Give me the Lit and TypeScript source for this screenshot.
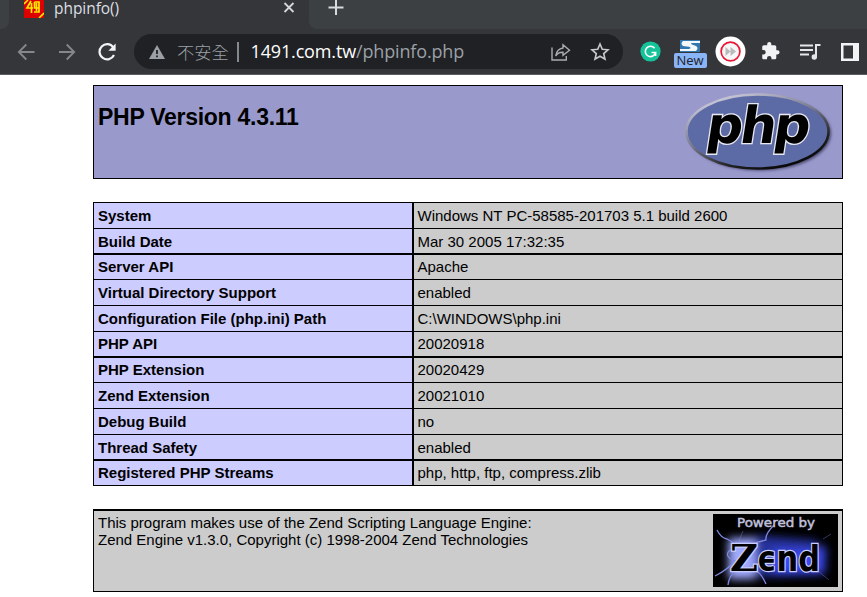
import { LitElement, html, css, svg } from "lit";
import { customElement } from "lit/decorators.js";

const ROWS: [string, string][] = [
  ["System", "Windows NT PC-58585-201703 5.1 build 2600"],
  ["Build Date", "Mar 30 2005 17:32:35"],
  ["Server API", "Apache"],
  ["Virtual Directory Support", "enabled"],
  ["Configuration File (php.ini) Path", "C:\\WINDOWS\\php.ini"],
  ["PHP API", "20020918"],
  ["PHP Extension", "20020429"],
  ["Zend Extension", "20021010"],
  ["Debug Build", "no"],
  ["Thread Safety", "enabled"],
  ["Registered PHP Streams", "php, http, ftp, compress.zlib"],
];

@customElement("browser-chrome")
class BrowserChrome extends LitElement {
  static styles = css`
    :host { display: block; height: 75px; background: #35363a; box-sizing: border-box; border-bottom: 1px solid #5b5c60; font-family: "Open Sans", "Noto Sans CJK TC", sans-serif; }
    svg { display: block; flex: none; }
    .tabs { display: flex; height: 29px; background: #3c4043; }
    .left { width: 9px; background: #3c4043; border-radius: 0 0 8px 0; }
    .under { background: #35363a; display: flex; width: 100%; }
    .tab { width: 300px; display: flex; align-items: flex-start; }
    .fav { margin-left: 15px; }
    .title { margin: 0 0 0 10px; font-size: 15.5px; line-height: 17px; color: #dcdee1; width: 219px; white-space: nowrap; letter-spacing: -0.05px; }
    .close { margin-top: 1px; margin-left: 9px; }
    .rest { flex: 1; background: #3c4043; border-radius: 0 0 0 8px; padding-left: 19px; }
    .bar { display: flex; align-items: center; height: 45px; }
    .back { margin-left: 17px; }
    .fwd { margin-left: 20px; }
    .reload { margin-left: 19px; }
    .omni { margin-left: 18px; width: 489px; height: 35px; border-radius: 18px; background: #202124; display: flex; align-items: center; font-size: 18px; line-height: 35px; white-space: nowrap; }
    .warn { margin-left: 14px; }
    .unsafe { margin-left: 11px; color: #9aa0a6; width: 52px; font-family: "Noto Sans CJK TC", sans-serif; font-weight: 300; font-size: 17.3px; }
    .sep { width: 1.5px; height: 20px; background: #85888c; margin-left: 8px; }
    .url { margin-left: 12px; color: #9aa0a6; width: 300px; letter-spacing: -0.15px; }
    .host { color: #fff; }
    .star { margin-left: 19px; }
    .gram { margin-left: 17px; }
    .ext { margin-left: 12px; width: 34px; height: 30px; display: flex; flex-direction: column; align-items: center; margin-top: 7px; }
    .badge { margin-top: 1px; background: #8ab4f8; color: #202124; border-radius: 2px; font-size: 13px; line-height: 15px; height: 15px; width: 33px; text-align: center; }
    .ff { margin-left: 8px; }
    .puz { margin-left: 15px; }
    .media { margin-left: 20px; }
    .panel { margin-left: 19px; }
  `;
  render() {
    return html`
      <div class="tabs"><div class="under">
        <div class="left"></div>
        <div class="tab">
          <svg class="fav" width="20" height="18" viewBox="0 0 20 18"><path fill="#dc0000" d="M0 0H20V18H0Z"/><path d="M0 4L4 0M15 18L20 13" stroke="#ffe800" stroke-width="1.6"/><path d="M7 1L3 8H9M7.500 3V13M10.500 2H15V12H10M10.500 2V8H14.500M12.500 3V11" fill="none" stroke="#ffe800" stroke-width="1.7"/></svg>
          <span class="title">phpinfo()</span>
          <svg class="close" width="14" height="14" viewBox="0 0 14 14"><path d="M2.500 2L11.500 11M11.500 2L2.500 11" stroke="#d4d6d9" stroke-width="1.8"/></svg>
        </div>
        <div class="rest"><svg width="16" height="16" viewBox="0 0 16 16"><path d="M.5 7.500H15.500M8 0V15" stroke="#d8dadd" stroke-width="2"/></svg></div>
      </div></div>
      <div class="bar">
        <svg class="back" width="18" height="18" viewBox="0 0 18 18"><path d="M17.500 9H2M9.300 1.500L1.800 9L9.300 16.500" fill="none" stroke="#85878b" stroke-width="1.8"/></svg>
        <svg class="fwd" width="24" height="18" viewBox="0 0 24 18"><path d="M4 9H19M11.700 1.500L19.200 9L11.700 16.500" fill="none" stroke="#85878b" stroke-width="1.8"/></svg>
        <svg class="reload" width="18" height="18" viewBox="0 0 18 18"><path d="M15.300 4.300A7.600 7.600 0 1 0 16 12" fill="none" stroke="#f1f3f4" stroke-width="2.200"/><path d="M17.600 .6V7.800H10.400Z" fill="#f1f3f4"/></svg>
        <div class="omni">
          <svg class="warn" width="18" height="16" viewBox="0 0 18 16"><path d="M9 1L17 15H1Z" fill="#9aa0a6"/><path d="M9 6V10M9 11.500V13.300" stroke="#202124" stroke-width="1.8"/></svg>
          <span class="unsafe">不安全</span><i class="sep"></i>
          <span class="url"><span class="host">1491.com.tw</span>/phpinfo.php</span>
          <svg width="20" height="18" viewBox="0 0 20 18"><path d="M1 4.500V17H15.300V13M12 1.800L18.500 7.200L12 12.400V9.300C8.500 9.200 6.300 10.200 4.700 13C5.300 8.600 7.700 5.600 12 5Z" fill="none" stroke="#a9acb0" stroke-width="1.4"/></svg>
          <svg class="star" width="20" height="20" viewBox="0 0 20 20"><path d="M10 2L12.300 7.300L18 7.800L13.700 11.600L15 17.200L10 14.200L5 17.200L6.300 11.600L2 7.800L7.700 7.300Z" fill="none" stroke="#c8cacd" stroke-width="1.6"/></svg>
        </div>
        <svg class="gram" width="21" height="21" viewBox="0 0 21 21"><circle cx="10.500" cy="10.500" r="10.100" fill="#15c39a"/><path d="M14.600 7.200A5.200 5.200 0 1 0 15.600 11.500H11.500M15.600 11V15" fill="none" stroke="#fff" stroke-width="1.6"/></svg>
        <div class="ext">
          <svg width="20" height="12" viewBox="0 0 20 12"><path fill="#3278b0" d="M0 0H20V12H0Z"/><path fill="#f5f8fa" d="M3 1H20V3H12Q10 3.500 12 4.500L16 6Q19 8 16 11H0V9H9Q12 8 9 6.800L3 6Q0 3.500 3 1Z"/></svg>
          <span class="badge">New</span>
        </div>
        <svg class="ff" width="31" height="31" viewBox="0 0 31 31"><circle cx="15.500" cy="15.500" r="15" fill="#fff"/><circle cx="15.500" cy="15.500" r="9.400" fill="#f6f6f6" stroke="#e51937" stroke-width="1.7"/><path fill="#b9babb" d="M10.500 11L15.500 15.500L10.500 20ZM15.500 11L21 15.500L15.500 20Z"/></svg>
        <svg class="puz" width="19" height="19" viewBox="1 1 23 23"><path fill="#f1f3f4" d="M21 11h-1.500V7c0-1.100-.9-2-2-2h-4V3.500a2.500 2.500 0 0 0-5 0V5h-4c-1.100 0-2 .9-2 2v3.800H4a2.700 2.700 0 0 1 0 5.400H2.500V20c0 1.100.9 2 2 2h3.800v-1.500a2.700 2.700 0 0 1 5.400 0V22h3.800c1.100 0 2-.9 2-2v-4H21a2.500 2.500 0 0 0 0-5z"/></svg>
        <svg class="media" width="22" height="18" viewBox="0 0 22 18"><path d="M0 2.500H13M0 7H13M0 11.500H9M16 14V2H20.500" stroke="#e4e6e8" stroke-width="2" fill="none"/><circle cx="14.300" cy="14" r="2.700" fill="#e4e6e8"/></svg>
        <svg class="panel" width="18" height="18" viewBox="0 0 18 18"><path fill="#f1f3f4" fill-rule="evenodd" d="M0 0H18V18H0ZM2.500 2.500V15.500H12V2.500Z"/></svg>
      </div>`;
  }
}

const bolt = (d: string, w: number) => svg`<path d=${d} fill="none" stroke="#7f88dc" stroke-width=${w}/>`;

@customElement("app-root")
class AppRoot extends LitElement {
  static styles = css`
    :host { display: block; width: 867px; height: 597px; background: #fff; overflow: hidden; font-family: "Liberation Sans", Arial, sans-serif; font-size: 15px; color: #000; }
    .page { width: 750px; margin: 10px 0 0 93px; }
    svg { display: block; flex: none; }
    .head { height: 94px; box-sizing: border-box; border: 1px solid #000; background: #9999cc; display: flex; justify-content: space-between; }
    h1 { margin: 16px 0 0 4px; font-size: 23px; letter-spacing: -0.27px; line-height: 30px; font-weight: bold; white-space: nowrap; }
    .logo { margin: 3px 4px 0 0; }
    .table { margin-top: 23px; border: solid #000; border-width: 0 1px 1px; }
    .row { display: flex; height: 26px; box-sizing: border-box; border-top: 1px solid #000; line-height: 25px; white-space: nowrap; }
    .row:nth-child(4n + 2) { height: 25px; }
    .row:nth-child(4n + 3) { border-top-width: 2px; line-height: 24px; }
    .row:nth-child(6) { line-height: 24px; }
    .k { width: 318px; box-sizing: border-box; padding-left: 4px; background: #ccccff; font-weight: bold; }
    .v { flex: 1; background: #cccccc; border-left: 2px solid #000; padding-left: 3.5px; }
    .foot { margin-top: 23px; height: 83px; box-sizing: border-box; border: 1px solid #000; border-top-width: 2px; background: #cccccc; display: flex; justify-content: space-between; }
    .foot p { margin: 3px 0 0 4px; line-height: 17px; white-space: nowrap; }
    .zend { margin: 3px 4px 0 0; }
  `;
  render() {
    return html`
      <browser-chrome></browser-chrome>
      <div class="page">
        <div class="head">
          <h1>PHP Version 4.3.11</h1>
          <svg class="logo" width="154" height="86" viewBox="684 89 154 86">
            <defs>
              <linearGradient id="rim" x1="0.2" y1="0" x2="0.8" y2="1"><stop offset="0" stop-color="#d0d0e0"/><stop offset=".45" stop-color="#77778d"/><stop offset=".75" stop-color="#222"/><stop offset="1" stop-color="#000"/></linearGradient>
              <filter id="soft" x="-10%" y="-10%" width="120%" height="130%"><feGaussianBlur stdDeviation="1.5"/></filter>
            </defs>
            <ellipse cx="760" cy="133.500" rx="71" ry="37" fill="#44446a" filter="url(#soft)"/>
            <ellipse cx="757.500" cy="131.500" rx="71" ry="37" fill="#5c6aa6" stroke="url(#rim)" stroke-width="2.500"/>
            <text transform="translate(704.500 142.500) skewX(-8.700)" letter-spacing="-2.800" font-family="DejaVu Sans" font-size="51" font-weight="bold" fill="#000" stroke="#e8e8f2" stroke-width="2.600" paint-order="stroke">php</text>
          </svg>
        </div>
        <div class="table">
          ${ROWS.map(([k, v]) => html`<div class="row"><div class="k">${k}</div><div class="v">${v}</div></div>`)}
        </div>
        <div class="foot">
          <p>This program makes use of the Zend Scripting Language Engine:<br>Zend Engine v1.3.0, Copyright (c) 1998-2004 Zend Technologies</p>
          <svg class="zend" width="125" height="73" viewBox="0 0 125 73">
            <defs>
              <filter id="glow" x="-30%" y="-30%" width="160%" height="160%"><feGaussianBlur stdDeviation="4"/></filter>
            </defs>
            <path fill="#000" d="M0 0H125V73H0Z"/>
            <g filter="url(#glow)"><path fill="#26309c" d="M15 24L50 22L100 26L114 34L112 60L76 62L15 63Z"/><path fill="#a0aaff" d="M16 25H42V65H16Z"/><path fill="#3a4af0" d="M60 36H110V59H60Z"/></g>
            ${bolt("M4 16Q8 24 14 25L23 30M61 11Q52 20 53 26L38 30M17 36Q10 42 22 47Q14 56 2 62M40 55Q48 58 53 70M22 58Q16 62 15 71", 1.3)}
            ${bolt("M30 17L25 29M110 25L118 20M105 57L116 66", 0.4)}
            <text x="24" y="13" textLength="78" lengthAdjust="spacingAndGlyphs" font-family="DejaVu Sans" font-size="13" fill="#c0c0df" stroke="#c0c0df" stroke-width=".5">Powered by</text>
            <g fill="#000" stroke="#c9ceff" stroke-width="2.600" paint-order="stroke" font-weight="bold">
              <text x="17" y="56.500" font-family="DejaVu Serif" font-size="38" textLength="28" lengthAdjust="spacingAndGlyphs">Z</text>
              <text x="44" y="56.500" font-family="DejaVu Sans" font-size="36" textLength="63" lengthAdjust="spacingAndGlyphs">ϵnd</text>
            </g>
          </svg>
        </div>
      </div>`;
  }
}
